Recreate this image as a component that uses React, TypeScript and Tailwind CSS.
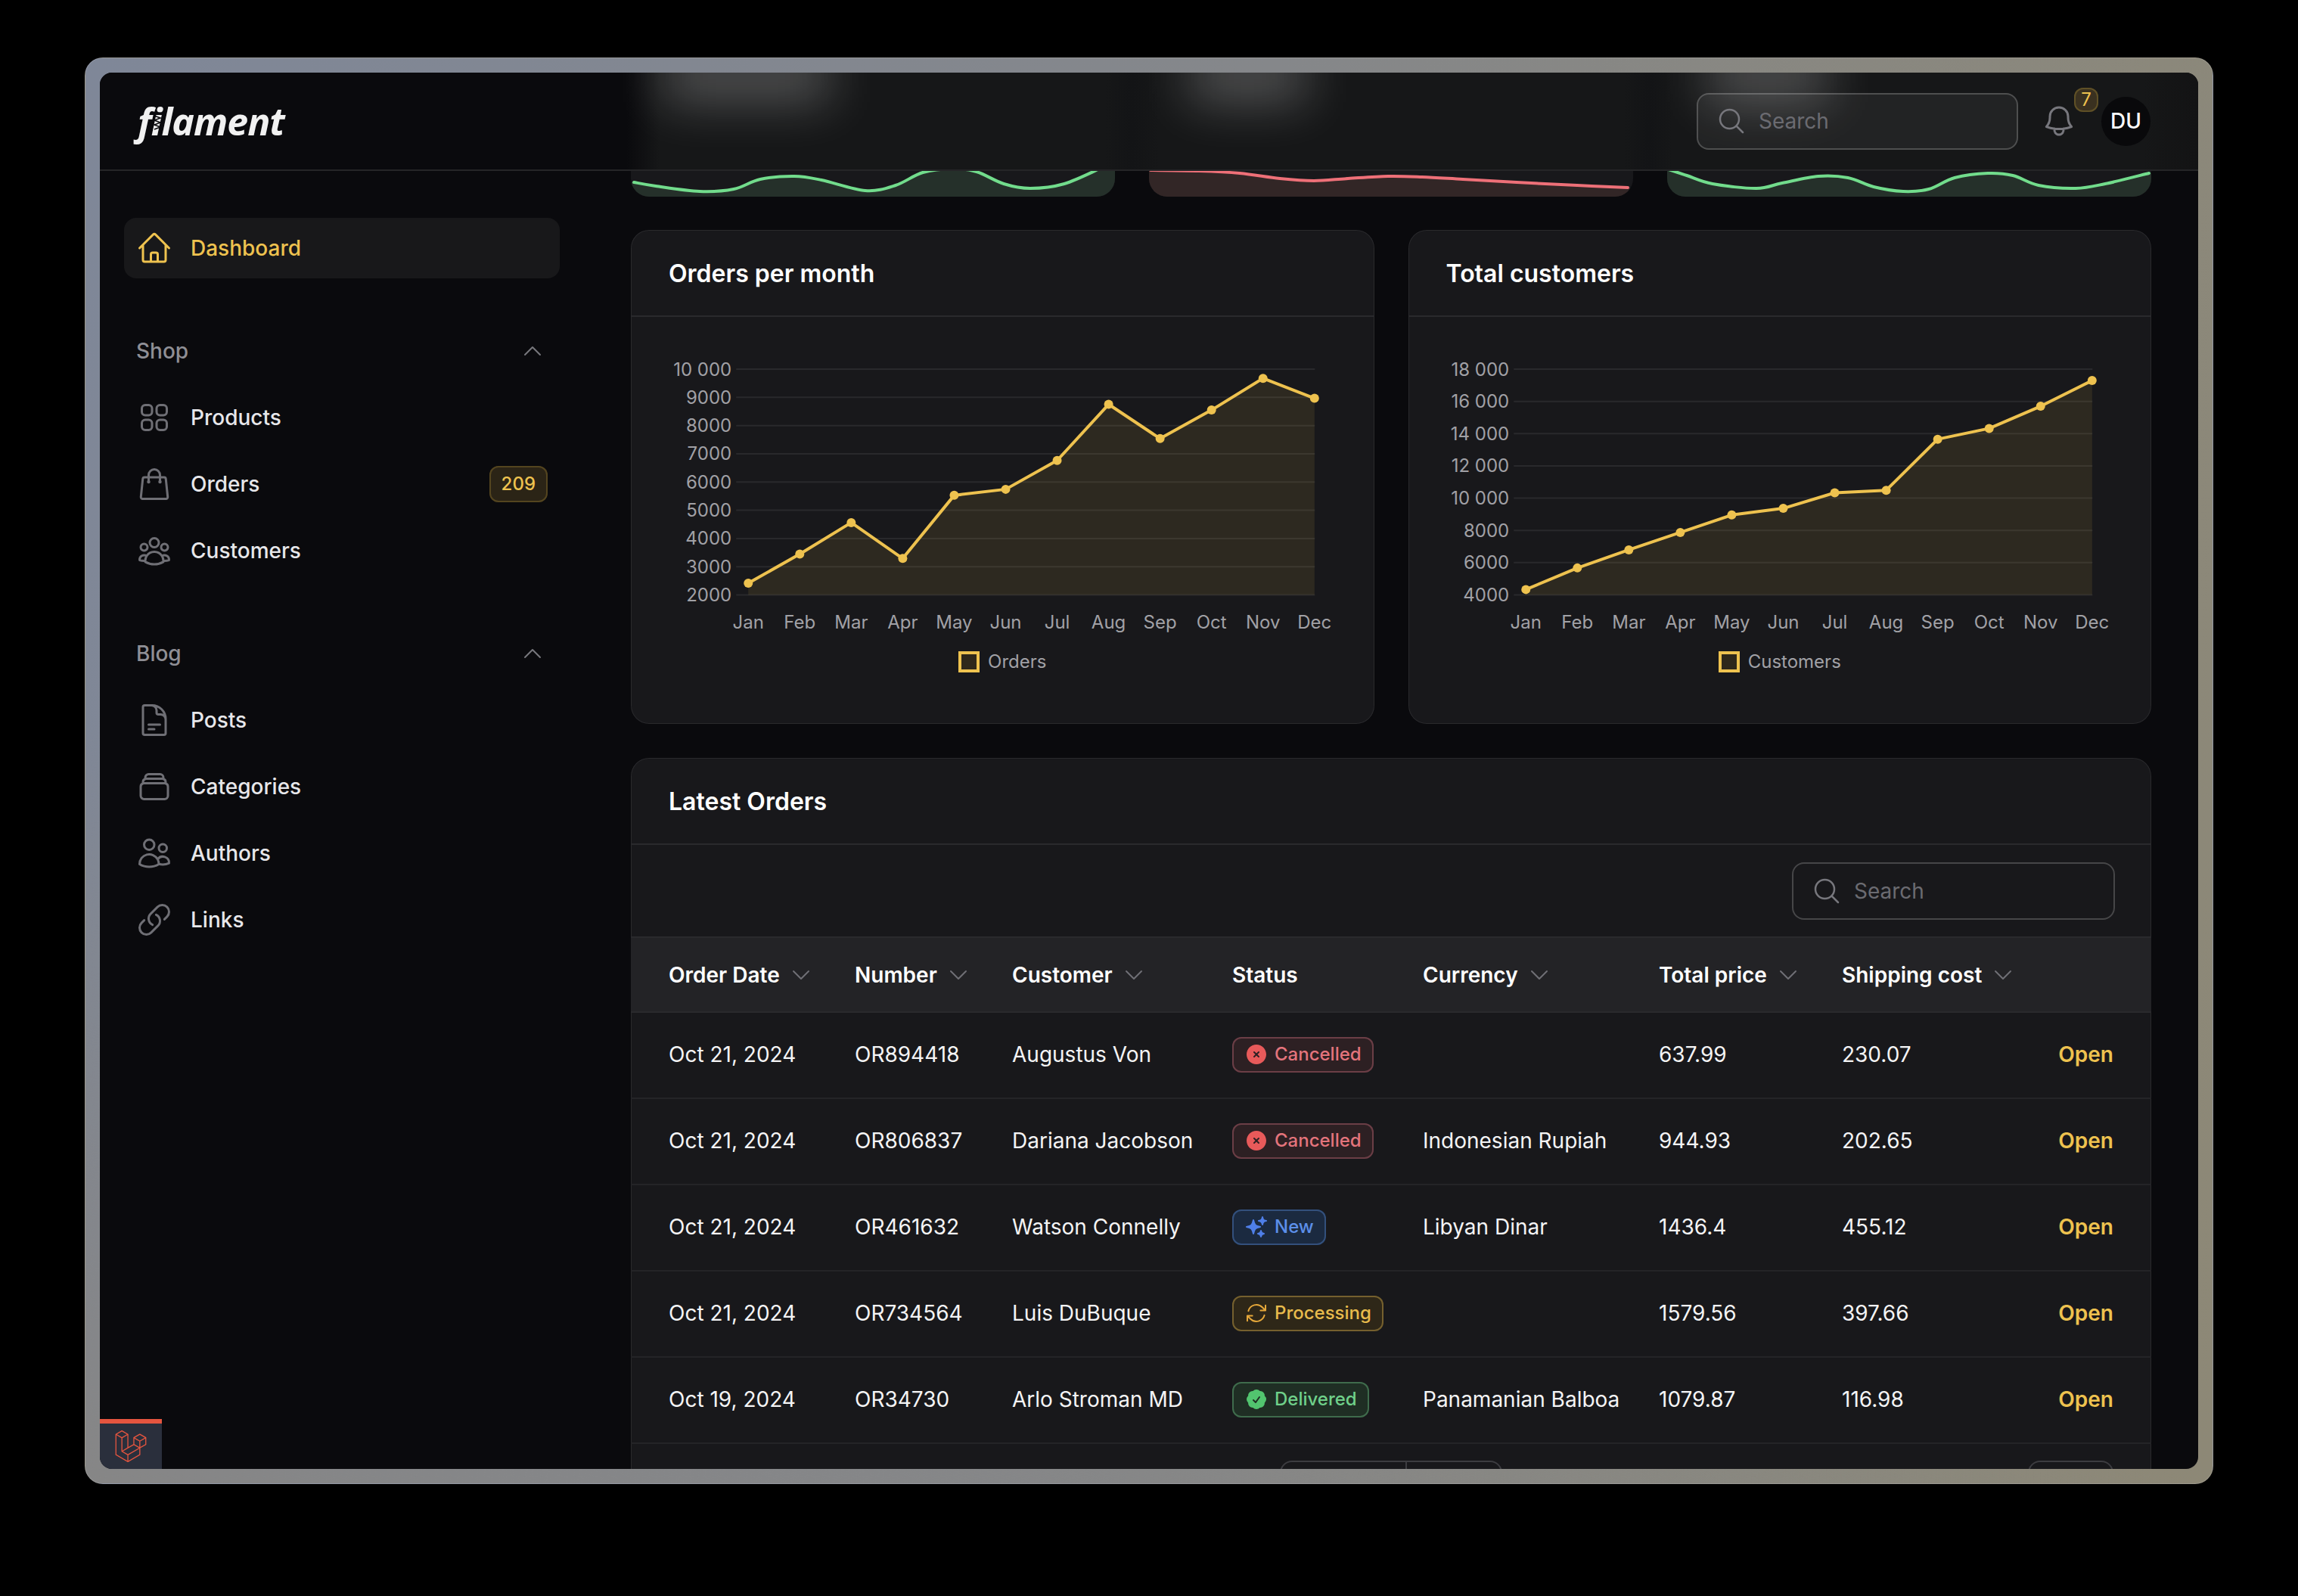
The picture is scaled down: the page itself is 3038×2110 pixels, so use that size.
import type { ReactNode } from 'react';
import { SiLaravel } from 'react-icons/si';
import {
  HiCheckBadge,
  HiOutlineArrowPath,
  HiOutlineBell,
  HiOutlineChevronDown,
  HiOutlineChevronUp,
  HiOutlineDocumentText,
  HiOutlineHome,
  HiOutlineLink,
  HiOutlineMagnifyingGlass,
  HiOutlineRectangleStack,
  HiOutlineShoppingBag,
  HiOutlineSquares2X2,
  HiOutlineUserGroup,
  HiOutlineUsers,
  HiSparkles,
  HiXCircle,
} from 'react-icons/hi2';

const MONTHS = ['Jan', 'Feb', 'Mar', 'Apr', 'May', 'Jun', 'Jul', 'Aug', 'Sep', 'Oct', 'Nov', 'Dec'];

const ORDERS = [2416, 3449, 4562, 3292, 5528, 5742, 6764, 8753, 7539, 8550, 9674, 8966];
const CUSTOMERS = [4334, 5671, 6792, 7873, 8955, 9368, 10331, 10489, 13655, 14323, 15700, 17292];

// sparkline points, y measured from the top of the svg
const SPARK_GREEN_A: [number, number][] = [
  [4, 41], [33, 46], [91, 53], [136, 50], [171, 37], [216, 33], [252, 38], [310, 52],
  [350, 45], [386, 28], [426, 23], [457, 27], [493, 43], [528, 49], [573, 43], [622, 22],
];
const SPARK_RED: [number, number][] = [
  [2, 25], [66, 26], [120, 29], [173, 36], [218, 39], [263, 36], [316, 33], [361, 34],
  [415, 37], [486, 41], [566, 45], [633, 48],
];
const SPARK_GREEN_B: [number, number][] = [
  [2, 24], [26, 32], [60, 43], [118, 49], [152, 42], [200, 33], [239, 35], [273, 47],
  [312, 53], [346, 50], [380, 35], [424, 29], [457, 32], [491, 45], [540, 49], [579, 43], [637, 29],
];

const ROWS = [
  { date: 'Oct 21, 2024', number: 'OR894418', customer: 'Augustus Von', status: 'Cancelled', currency: '', total: '637.99', shipping: '230.07' },
  { date: 'Oct 21, 2024', number: 'OR806837', customer: 'Dariana Jacobson', status: 'Cancelled', currency: 'Indonesian Rupiah', total: '944.93', shipping: '202.65' },
  { date: 'Oct 21, 2024', number: 'OR461632', customer: 'Watson Connelly', status: 'New', currency: 'Libyan Dinar', total: '1436.4', shipping: '455.12' },
  { date: 'Oct 21, 2024', number: 'OR734564', customer: 'Luis DuBuque', status: 'Processing', currency: '', total: '1579.56', shipping: '397.66' },
  { date: 'Oct 19, 2024', number: 'OR34730', customer: 'Arlo Stroman MD', status: 'Delivered', currency: 'Panamanian Balboa', total: '1079.87', shipping: '116.98' },
];

function smoothPath(pts: [number, number][]) {
  let d = `M${pts[0][0]} ${pts[0][1]}`;
  for (let i = 0; i < pts.length - 1; i++) {
    const p0 = pts[Math.max(i - 1, 0)];
    const p1 = pts[i];
    const p2 = pts[i + 1];
    const p3 = pts[Math.min(i + 2, pts.length - 1)];
    const c1x = p1[0] + (p2[0] - p0[0]) / 6;
    const c1y = p1[1] + (p2[1] - p0[1]) / 6;
    const c2x = p2[0] - (p3[0] - p1[0]) / 6;
    const c2y = p2[1] - (p3[1] - p1[1]) / 6;
    d += ` C${c1x} ${c1y} ${c2x} ${c2y} ${p2[0]} ${p2[1]}`;
  }
  return d;
}

function Sparkline({ points, stroke, fill }: { points: [number, number][]; stroke: string; fill: string }) {
  const line = smoothPath(points);
  const first = points[0];
  const last = points[points.length - 1];
  return (
    <svg viewBox="0 0 640 60" className="block w-full h-[60px]">
      <path d={`M0 ${first[1]} L${line.slice(1)} L640 ${last[1]} L640 60 L0 60 Z`} fill={fill} />
      <path d={line} fill="none" stroke={stroke} strokeWidth="4" strokeLinecap="round" />
    </svg>
  );
}

function StatCard({ points, stroke, fill }: { points: [number, number][]; stroke: string; fill: string }) {
  return (
    <div className="h-[164px] rounded-b-3xl overflow-hidden bg-[#18181b] flex flex-col justify-end">
      <Sparkline points={points} stroke={stroke} fill={fill} />
    </div>
  );
}

function fmtTick(v: number) {
  return v >= 10000 ? `${Math.floor(v / 1000)} 000` : String(v);
}

function LineChart({ data, ticks, label }: { data: number[]; ticks: number[]; label: string }) {
  const top = 65;
  const bottom = 363.5;
  const min = ticks[0];
  const max = ticks[ticks.length - 1];
  const x = (i: number) => 155 + i * 68.05;
  const y = (v: number) => bottom - ((v - min) / (max - min)) * (bottom - top);
  const line = data.map((v, i) => `${x(i)},${y(v)}`).join(' ');
  return (
    <div>
      <svg viewBox="0 0 982 434" className="block w-full h-[434px]">
        {ticks.map((t) => (
          <g key={t}>
            <line x1="139" x2="904" y1={y(t)} y2={y(t)} stroke="#29292c" strokeWidth="2" />
            <text x="133" y={y(t) + 8.5} textAnchor="end" fontSize="24" fill="#a1a1a6">
              {fmtTick(t)}
            </text>
          </g>
        ))}
        <polygon points={`${x(0)},${bottom} ${line} ${x(11)},${bottom}`} fill="#eec24f" fillOpacity="0.1" />
        <polyline points={line} fill="none" stroke="#eec24f" strokeWidth="4" strokeLinejoin="round" />
        {data.map((v, i) => (
          <circle key={i} cx={x(i)} cy={y(v)} r="6" fill="#eec24f" />
        ))}
        {MONTHS.map((m, i) => (
          <text key={m} x={x(i)} y="408" textAnchor="middle" fontSize="24" fill="#a1a1a6">
            {m}
          </text>
        ))}
      </svg>
      <div className="flex items-center justify-center gap-[11px] h-[36px]">
        <span className="w-[28px] h-[28px] border-4 border-[#eec24f] bg-[#2f281b]" />
        <span className="text-[24px] text-[#a1a1a6]">{label}</span>
      </div>
    </div>
  );
}

function Card({ title, children }: { title: string; children: ReactNode }) {
  return (
    <section className="rounded-3xl bg-[#18181b] ring-1 ring-inset ring-white/[0.08] overflow-hidden">
      <div className="h-[115px] pt-[2px] flex items-center pl-[50px] border-b-2 border-[#2a2a2d]">
        <h2 className="text-[32px] font-semibold text-white">{title}</h2>
      </div>
      {children}
    </section>
  );
}

function NavItem({ icon, label, active, badge }: { icon: ReactNode; label: string; active?: boolean; badge?: string }) {
  return (
    <a className={`h-[80px] rounded-2xl px-4 flex items-center gap-6 text-[28px] font-medium ${active ? 'bg-[#18181a] text-[#eec24f]' : 'text-[#e7e7ea]'}`}>
      <span className={`text-[48px] ${active ? 'text-[#eec24f]' : 'text-[#6f6f75]'}`}>{icon}</span>
      <span>{label}</span>
      {badge && (
        <span className="ml-auto h-[48px] px-4 flex items-center rounded-xl bg-[#2b2416] ring-2 ring-inset ring-[#54451f] text-[24px] text-[#eec24f]">
          {badge}
        </span>
      )}
    </a>
  );
}

function NavGroup({ label, children }: { label: string; children: ReactNode }) {
  return (
    <div>
      <div className="h-[40px] px-4 flex items-center justify-between text-[28px] font-medium text-[#8f8f95]">
        <span>{label}</span>
        <HiOutlineChevronUp className="w-8 h-8 mr-1 text-[#77777d]" />
      </div>
      <div className="mt-[28px] flex flex-col gap-2">{children}</div>
    </div>
  );
}

const STATUS = {
  Cancelled: { icon: <HiXCircle className="w-8 h-8 text-[#e85a5a]" />, cls: 'bg-[#2d2023] ring-[#6b3e46] text-[#e4747c]' },
  New: { icon: <HiSparkles className="w-8 h-8 text-[#4f7fe8]" />, cls: 'bg-[#1b2a40] ring-[#33507c] text-[#5c8fe9]' },
  Processing: { icon: <HiOutlineArrowPath className="w-8 h-8 text-[#e6a83a]" />, cls: 'bg-[#2e2718] ring-[#75602e] text-[#e8bb4c]' },
  Delivered: { icon: <HiCheckBadge className="w-8 h-8 text-[#52c46f]" />, cls: 'bg-[#1f2e24] ring-[#3f6b4c] text-[#6fd08a]' },
};

function StatusBadge({ status }: { status: keyof typeof STATUS }) {
  const cfg = STATUS[status];
  return (
    <span className={`inline-flex align-middle items-center gap-2 h-[47px] pl-4 pr-4 rounded-xl ring-2 ring-inset text-[24px] font-medium ${cfg.cls}`}>
      {cfg.icon}
      {status}
    </span>
  );
}

function SortHead({ label }: { label: string }) {
  return (
    <th className="px-6 text-left font-semibold text-white">
      <span className="inline-flex items-center gap-3">
        {label}
        <HiOutlineChevronDown className="w-8 h-8 text-[#6f6f75]" />
      </span>
    </th>
  );
}

function SearchBox({ className }: { className: string }) {
  return (
    <div className={`flex items-center gap-4 rounded-2xl ring-2 ring-inset pl-[26px] ${className}`}>
      <HiOutlineMagnifyingGlass className="w-10 h-10 text-[#77777d]" />
      <span className="text-[28px] text-[#6b6b71]">Search</span>
    </div>
  );
}

export default function App() {
  return (
    <div className="h-[2110px] bg-black flex justify-center pt-[76px] font-[family-name:Inter,sans-serif]">
      <div className="w-[2814px] h-[1886px] p-[19px] rounded-3xl border border-white/15 bg-[linear-gradient(20deg,#868686_0%,transparent_35%),linear-gradient(100deg,#7f8798,#85878a_50%,#8d8876)]">
        <div className="relative h-full flex overflow-hidden rounded-2xl bg-[#0a0a0d]">
          <header className="absolute inset-x-0 top-0 z-10 h-[130px] flex border-b-2 border-[#252527]">
            <div className="w-[640px] pl-[50px] flex items-center bg-[#0a0a0d]">
              <span className="relative font-['Open_Sans'] italic font-bold text-[50px] tracking-[-1px] text-[#f1f1f1]">
                filament
                {/* the wavy filament in the stem of the i */}
                <svg viewBox="0 0 10 22" className="absolute left-[21px] top-[29px] w-[10px] h-[22px]">
                  <path d="M1 1 L9 4 L1 7 L9 10 L1 13 L9 16 L1 19" fill="none" stroke="#0a0a0d" strokeWidth="1.6" />
                </svg>
              </span>
            </div>
            <div className="relative flex-1 pr-[63px] flex items-center justify-end gap-8 bg-[linear-gradient(90deg,#0a0a0d_56px,#161718_100px,#161718_690px,#131416_725px,#161718_760px,#161718_1375px,#131416_1408px,#161718_1440px,#161718_2060px,#131314_2134px)]">
              {/* stat figures from the cards behind, blurred by the glass bar */}
              <div className="absolute inset-0 overflow-hidden">
                <div className="absolute left-[105px] -top-[30px] w-[220px] h-[70px] bg-white/25 blur-[32px]" />
                <div className="absolute left-[800px] -top-[30px] w-[155px] h-[70px] bg-white/25 blur-[32px]" />
                <div className="absolute left-[1485px] -top-[30px] w-[160px] h-[70px] bg-white/25 blur-[32px]" />
              </div>
              <SearchBox className="relative -mr-[2px] w-[425px] h-[75px] bg-white/5 ring-white/20" />
              <div className="relative w-12 h-12 text-[#77777d]">
                <HiOutlineBell className="w-12 h-12" />
                <span className="absolute left-[44px] -top-5 w-[32px] h-[32px] flex items-center justify-center rounded-xl bg-[#3a3120] ring-2 ring-inset ring-[#5f5026] text-[24px] text-[#eec24f]">
                  7
                </span>
              </div>
              <div className="relative w-[65px] h-[65px] rounded-full bg-[#09090b] flex items-center justify-center text-[28px] font-medium text-white">
                DU
              </div>
            </div>
          </header>

          <aside className="w-[640px] shrink-0 px-8 pt-[192px] flex flex-col gap-[76px]">
            <NavItem icon={<HiOutlineHome />} label="Dashboard" active />
            <NavGroup label="Shop">
              <NavItem icon={<HiOutlineSquares2X2 />} label="Products" />
              <NavItem icon={<HiOutlineShoppingBag />} label="Orders" badge="209" />
              <NavItem icon={<HiOutlineUserGroup />} label="Customers" />
            </NavGroup>
            <NavGroup label="Blog">
              <NavItem icon={<HiOutlineDocumentText />} label="Posts" />
              <NavItem icon={<HiOutlineRectangleStack />} label="Categories" />
              <NavItem icon={<HiOutlineUsers />} label="Authors" />
              <NavItem icon={<HiOutlineLink />} label="Links" />
            </NavGroup>
          </aside>

          <main className="flex-1 min-w-0 px-[62px] flex flex-col gap-[44px]">
            <div className="grid grid-cols-3 gap-[45px] shrink-0">
              <StatCard points={SPARK_GREEN_A} stroke="#72dc8c" fill="#25302a" />
              <StatCard points={SPARK_RED} stroke="#ee7078" fill="#322626" />
              <StatCard points={SPARK_GREEN_B} stroke="#72dc8c" fill="#25302a" />
            </div>

            <div className="grid grid-cols-2 gap-[45px] shrink-0">
              <div className="h-[654px]">
                <Card title="Orders per month">
                  <div className="h-[538px] pt-[4px]">
                    <LineChart data={ORDERS} ticks={[2000, 3000, 4000, 5000, 6000, 7000, 8000, 9000, 10000]} label="Orders" />
                  </div>
                </Card>
              </div>
              <div className="h-[654px]">
                <Card title="Total customers">
                  <div className="h-[538px] pt-[4px]">
                    <LineChart data={CUSTOMERS} ticks={[4000, 6000, 8000, 10000, 12000, 14000, 16000, 18000]} label="Customers" />
                  </div>
                </Card>
              </div>
            </div>

            <div className="shrink-0">
              <Card title="Latest Orders">
                <div className="h-[121px] pr-[48px] flex items-center justify-end">
                  <SearchBox className="w-[427px] h-[76px] bg-transparent ring-white/20" />
                </div>
                <table className="w-full table-fixed text-[28px] text-[#f4f4f5]">
                  <colgroup>
                    <col className="w-[272px]" />
                    <col className="w-[208px]" />
                    <col className="w-[291px]" />
                    <col className="w-[252px]" />
                    <col className="w-[312px]" />
                    <col className="w-[242px]" />
                    <col />
                  </colgroup>
                  <thead>
                    <tr className="h-[99px] bg-[#232326] border-y-2 border-[#2a2a2d]">
                      <th className="pl-[50px] pr-0 text-left font-semibold text-white">
                        <span className="inline-flex items-center gap-3">
                          Order Date
                          <HiOutlineChevronDown className="w-8 h-8 text-[#6f6f75]" />
                        </span>
                      </th>
                      <SortHead label="Number" />
                      <SortHead label="Customer" />
                      <th className="px-6 text-left font-semibold text-white">Status</th>
                      <SortHead label="Currency" />
                      <SortHead label="Total price" />
                      <SortHead label="Shipping cost" />
                    </tr>
                  </thead>
                  <tbody>
                    {ROWS.map((row) => (
                      <tr key={row.number} className="h-[114px] border-b-2 border-[#242427] [&>td]:pb-[2px]">
                        <td className="pl-[50px]">{row.date}</td>
                        <td className="px-6">{row.number}</td>
                        <td className="px-6">{row.customer}</td>
                        <td className="px-6">
                          <StatusBadge status={row.status as keyof typeof STATUS} />
                        </td>
                        <td className="px-6 whitespace-nowrap">{row.currency}</td>
                        <td className="px-6">{row.total}</td>
                        <td className="pl-6 pr-[50px]">
                          <div className="flex items-center justify-between">
                            <span>{row.shipping}</span>
                            <a className="font-semibold text-[#eec24f]">Open</a>
                          </div>
                        </td>
                      </tr>
                    ))}
                  </tbody>
                </table>
                <div className="pt-[22px] pl-[858px] pr-[50px] flex justify-between">
                  <div className="w-[294px] h-[76px] rounded-2xl ring-2 ring-inset ring-[#3c3c40] flex">
                    <div className="w-[168px] border-r-2 border-[#3c3c40]" />
                  </div>
                  <div className="w-[113px] h-[76px] rounded-2xl ring-2 ring-inset ring-[#3c3c40]" />
                </div>
              </Card>
            </div>
          </main>

          {/* debug bar tab in the corner */}
          <div className="absolute left-0 bottom-0 z-20 w-[82px] h-[66px] flex items-center justify-center bg-[#2a2f3c] border-t-[6px] border-[#e5553f]">
            <SiLaravel className="w-[42px] h-[42px] text-[#e5553f]" />
          </div>
        </div>
      </div>
    </div>
  );
}
